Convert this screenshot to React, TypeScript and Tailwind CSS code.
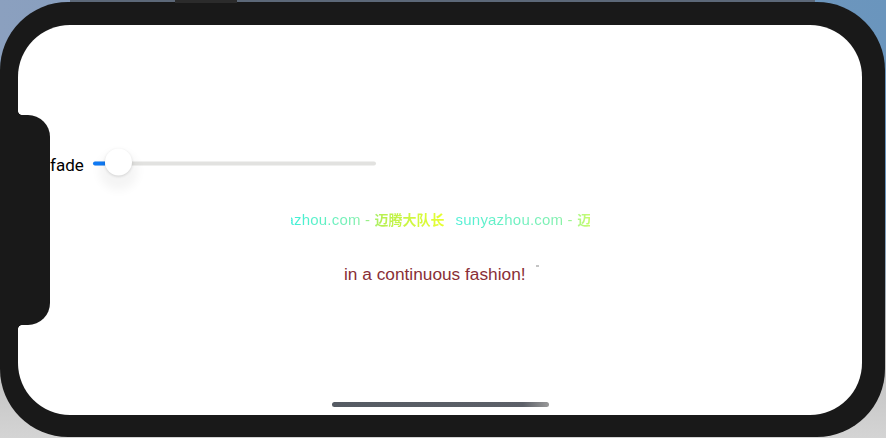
export default function App() {
  return (
    <div className="relative h-[438px] w-[886px] overflow-hidden bg-[linear-gradient(180deg,transparent_45%,#b8b8b8_75%,#d4d4d4_100%),linear-gradient(90deg,#8ba0bf_0%,#6a95bd_100%)] pt-[2px] pr-px pb-px">
      <div className="absolute left-[70px] top-0 h-[2px] w-[745px] bg-[#5c6878]" />
      <div className="absolute left-[175px] top-0 h-[3px] w-[62px] bg-[#2b2b2b]" />
      <div className="h-full w-full rounded-[68px] bg-[#191919] pt-[23px] pr-[23px] pb-[22px] pl-[18px]">
        <div className="relative flex h-full w-full flex-col overflow-hidden rounded-[52px] bg-white pl-[32px] font-['Inter',sans-serif]">
          <div className="absolute left-0 top-[86px] h-[4px] w-[4px] bg-[radial-gradient(circle_at_100%_0%,#ffffff_3.5px,#191919_4.2px)]" />
          <div className="absolute left-0 top-[90px] h-[210px] w-[32px] rounded-r-[22px] bg-[#191919]" />
          <div className="absolute left-0 top-[300px] h-[4px] w-[4px] bg-[radial-gradient(circle_at_100%_100%,#ffffff_3.5px,#191919_4.2px)]" />
          <div className="mt-[129px] flex h-[22px] items-center">
            <span className="w-[43px] text-[17px] leading-[22px] text-black font-['Roboto',sans-serif]">fade</span>
            <div className="relative h-[4px] w-[283px] -translate-y-[1.5px] rounded-full bg-[#e2e2e0]">
              <div className="h-full w-[12px] rounded-l-full bg-[#0f7af5]" />
              <div className="absolute left-[12px] top-[-13px] h-[27px] w-[27px] rounded-full bg-white shadow-[0_9px_10px_6px_rgba(0,0,0,0.045),0_1px_3px_rgba(0,0,0,0.14)]" />
            </div>
          </div>
          <div className="mt-[34px] ml-[241px] w-[299px] overflow-hidden">
            <div className="-ml-[38px] flex w-[430px] gap-[11px] whitespace-nowrap bg-[linear-gradient(90deg,#40f0d8_38px,#80f0b0_104px,#b8f050_129px,#e8ff30_192px,#e8ff30_197px,#50f0d8_200px,#80f0b0_304px,#d8ff60_344px)] bg-clip-text text-[15px] leading-[20px] tracking-[0.2px] text-transparent font-['Liberation_Sans','Noto_Sans_CJK_SC',sans-serif]">
              <span>sunyazhou.com - <span className="text-[14px] font-bold tracking-normal">迈腾大队长</span></span>
              <span>sunyazhou.com - <span className="text-[14px] font-bold tracking-normal">迈腾大队长</span></span>
            </div>
          </div>
          <div className="mt-[32px] ml-[294px] flex items-start">
            <span className="text-[17.3px] leading-[24px] text-[#8a2f36] font-['Liberation_Sans',sans-serif]">in a continuous fashion!</span>
            <span className="ml-[10px] mt-[3px] h-[2px] w-[3px] bg-[#c4c4c4]" />
          </div>
          <div className="mt-auto mb-[8px] ml-[282px] h-[5px] w-[217px] rounded-full bg-[linear-gradient(90deg,#555b63_0%,#5c6068_88%,#999_100%)]" />
        </div>
      </div>
    </div>
  );
}
